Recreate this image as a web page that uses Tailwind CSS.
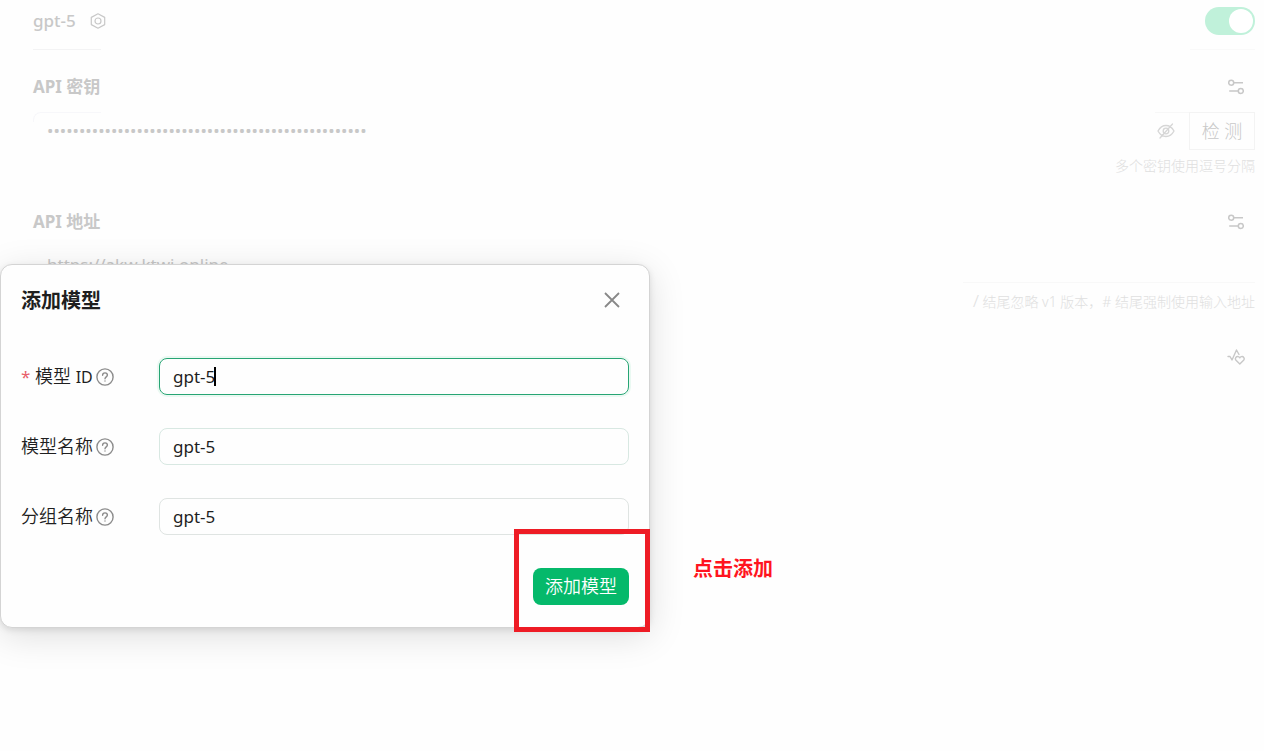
<!DOCTYPE html>
<html lang="zh-CN">
<head>
    <meta charset="UTF-8">
    <meta name="viewport" content="width=device-width, initial-scale=1.0">
    <title>添加模型</title>
    <script src="https://cdn.jsdelivr.net/npm/@tailwindcss/browser@4"></script>
</head>
<body class="relative min-h-screen overflow-hidden bg-[#fefefe] font-['Noto_Sans','Noto_Sans_CJK_SC',sans-serif] text-[17px] text-[#1f1f1f]">
    <!-- Provider settings -->
    <main class="pl-[33px] pr-[9px] text-[#c8c8c8]">
        <header class="flex h-[42px] items-center justify-between">
            <div class="flex items-center gap-3.5">
                <h1 class="font-medium">gpt-5</h1>
                <button type="button" aria-label="设置">
                    <svg class="size-4" viewBox="0 0 16 16" fill="none" stroke="currentColor" stroke-width="1.2" stroke-linejoin="round">
                        <path d="M8 .8 14.7 4.4v7.2L8 15.2 1.3 11.6V4.4z"/>
                        <circle cx="8" cy="8" r="3"/>
                    </svg>
                </button>
            </div>
            <label class="relative flex h-7 w-[50px] items-center rounded-full bg-[#c0f1da] p-0.5">
                <input type="checkbox" checked aria-label="启用" class="absolute inset-0 appearance-none rounded-full">
                <span class="ml-auto size-6 rounded-full bg-white"></span>
            </label>
        </header>
        <div class="mt-[7px] flex justify-between">
            <span class="h-px w-[68px] bg-[#f3f3f4]"></span>
            <span class="h-px w-[65px] bg-[#f9f9f9]"></span>
        </div>

        <section class="pt-[25px]">
            <div class="flex h-6 items-center justify-between pr-[11px]">
                <label for="apiKey" class="font-bold">API 密钥</label>
                <button type="button" aria-label="密钥设置">
                    <svg class="size-4" viewBox="0 0 16 16" fill="none" stroke="currentColor" stroke-width="1.5">
                        <circle cx="3.2" cy="3.8" r="2.5"/>
                        <path d="M5.7 3.8H15M1.2 12h9"/>
                        <circle cx="12.8" cy="12" r="2.5"/>
                    </svg>
                </button>
            </div>
            <div class="mt-[13px] flex h-[38px] items-center">
                <div class="flex h-full min-w-0 flex-1 items-start justify-between">
                    <span class="h-2.5 w-[68px] shrink-0 rounded-tl-lg border-l border-t border-[#f7f7fa]"></span>
                    <input id="apiKey" type="password" value="sk-00000000000000000000000000000000000000000000000" class="-ml-[54px] h-9 min-w-0 flex-1 bg-transparent outline-none">
                    <span class="h-px w-[34px] shrink-0 bg-[#f7f7f7]"></span>
                </div>
                <button type="button" aria-label="显示密钥" class="-ml-8 mr-3.5">
                    <svg class="size-[18px]" viewBox="0 0 18 18" fill="none" stroke="#d6d6d6" stroke-width="1.3" stroke-linecap="round">
                        <path d="M1 9c2-3.700 4.700-5.500 8-5.500S15 5.300 17 9c-2 3.700-4.700 5.500-8 5.500S3 12.700 1 9zM15.500 2 3 16"/>
                        <circle cx="9" cy="9" r="2.800"/>
                    </svg>
                </button>
                <button type="button" class="h-full w-[66px] border border-[#f3f3f3] text-[18px] font-light">检 测</button>
            </div>
            <p class="mt-1.5 text-right text-[14px] leading-5 font-light text-[#e0e0e0]">多个密钥使用逗号分隔</p>
        </section>

        <section class="pt-[34px]">
            <div class="flex h-6 items-center justify-between pr-[11px]">
                <label for="apiHost" class="font-bold">API 地址</label>
                <button type="button" aria-label="地址设置">
                    <svg class="size-4" viewBox="0 0 16 16" fill="none" stroke="currentColor" stroke-width="1.5">
                        <circle cx="3.2" cy="3.8" r="2.5"/>
                        <path d="M5.7 3.8H15M1.2 12h9"/>
                        <circle cx="12.8" cy="12" r="2.5"/>
                    </svg>
                </button>
            </div>
            <input id="apiHost" type="text" value="https://akw.ktwi.online" class="mt-3 block h-9 w-full bg-transparent pl-3.5 outline-none">
            <div class="flex justify-end">
                <div class="border-t border-[#f8f8f8] pl-2.5 pt-2">
                    <p class="text-[14px] leading-5 font-light text-[#e0e0e0]"><span class="text-[17px]">/</span> 结尾忽略 v1 版本，# 结尾强制使用输入地址</p>
                </div>
            </div>
        </section>

        <div class="mt-9 flex justify-end pr-2.5">
            <button type="button" aria-label="健康检查">
                <svg class="size-[18px]" viewBox="0 0 18 18" fill="none" stroke="currentColor" stroke-width="1.4" stroke-linecap="round" stroke-linejoin="round">
                    <path d="M1 8.500h2l2 3.500L9.500 2 12 6.500"/>
                    <path d="M12.800 16 9 12.300c-1.500-1.800.2-4.300 2.200-3.700.7.200 1.200.6 1.600 1.200.4-.6.900-1 1.600-1.200 2-.6 3.700 1.900 2.200 3.700z"/>
                </svg>
            </button>
        </div>
    </main>

    <!-- Dialog -->
    <div role="dialog" aria-labelledby="dialogTitle" class="absolute left-0 top-[264px] w-[650px] max-w-full rounded-xl border border-[#d4d4d4] bg-[#fefefe] px-5 pb-[22px] pt-5 shadow-[0_8px_36px_rgba(0,0,0,0.13),0_2px_6px_rgba(0,0,0,0.1)]">
        <div class="flex h-[30px] items-center justify-between pr-2">
            <h2 id="dialogTitle" class="pt-0.5 text-[20px] font-bold">添加模型</h2>
            <button type="button" aria-label="关闭">
                <svg class="size-[18px]" viewBox="0 0 18 18" fill="none" stroke="#888" stroke-width="1.8">
                    <path d="m2 2 14 14M16 2 2 16"/>
                </svg>
            </button>
        </div>
        <form class="mt-[43px]">
            <div class="space-y-[33px]">
                <div class="flex h-[37px] items-center">
                    <label for="modelId" class="flex w-[138px] items-center text-[18px]">
                        <span class="w-3.5 text-[17px] text-[#e8606a]">*</span>
                        <span class="font-[350]">模型 <span class="text-[16px] font-normal">ID</span></span>
                        <svg class="ml-[3px] size-[18px]" viewBox="0 0 18 18" fill="none" stroke="#8c8c8c" stroke-width="1.4" stroke-linecap="round">
                            <circle cx="9" cy="9" r="8.1"/>
                            <path d="M6.600 7.200C6.600 5.700 7.600 4.900 9 4.900s2.400.9 2.400 2.200C11.400 8.800 9 8.900 9 10.700M9 13v.1"/>
                        </svg>
                    </label>
                    <div class="relative h-full flex-1">
                        <input id="modelId" type="text" value="gpt-5" class="h-full w-full rounded-lg border border-[#27a574] px-[13px] shadow-[0_0_0_2px_rgba(0,185,107,0.08)] outline-none">
                        <span class="absolute left-[55px] top-[9px] h-[19px] w-0.5 bg-black"></span>
                    </div>
                </div>
                <div class="flex h-[37px] items-center">
                    <label for="modelName" class="flex w-[138px] items-center text-[18px] font-[350]">
                        模型名称
                        <svg class="ml-[3px] size-[18px]" viewBox="0 0 18 18" fill="none" stroke="#8c8c8c" stroke-width="1.4" stroke-linecap="round">
                            <circle cx="9" cy="9" r="8.1"/>
                            <path d="M6.600 7.200C6.600 5.700 7.600 4.900 9 4.900s2.400.9 2.400 2.200C11.400 8.800 9 8.900 9 10.700M9 13v.1"/>
                        </svg>
                    </label>
                    <input id="modelName" type="text" value="gpt-5" class="h-full min-w-0 flex-1 rounded-lg border border-[#d8e8e2] px-[13px] outline-none">
                </div>
                <div class="flex h-[37px] items-center">
                    <label for="groupName" class="flex w-[138px] items-center text-[18px] font-[350]">
                        分组名称
                        <svg class="ml-[3px] size-[18px]" viewBox="0 0 18 18" fill="none" stroke="#8c8c8c" stroke-width="1.4" stroke-linecap="round">
                            <circle cx="9" cy="9" r="8.1"/>
                            <path d="M6.600 7.200C6.600 5.700 7.600 4.900 9 4.900s2.400.9 2.400 2.200C11.400 8.800 9 8.900 9 10.700M9 13v.1"/>
                        </svg>
                    </label>
                    <input id="groupName" type="text" value="gpt-5" class="h-full min-w-0 flex-1 rounded-lg border border-[#dfe4e2] px-[13px] outline-none">
                </div>
            </div>
            <div class="mt-[33px] flex justify-end">
                <button type="submit" class="h-[37px] rounded-lg bg-[#05b96b] px-3 text-[18px] font-[350] text-white">添加模型</button>
            </div>
        </form>

        <!-- Callout around the submit button -->
        <div class="pointer-events-none absolute -bottom-[5px] -right-px h-[103px] w-[136px] border-5 border-[#ee1c25]"></div>
        <p class="absolute bottom-[43px] left-[692px] whitespace-nowrap text-[20px] leading-[30px] font-bold text-[#ff1420]">点击添加</p>
    </div>
</body>
</html>
